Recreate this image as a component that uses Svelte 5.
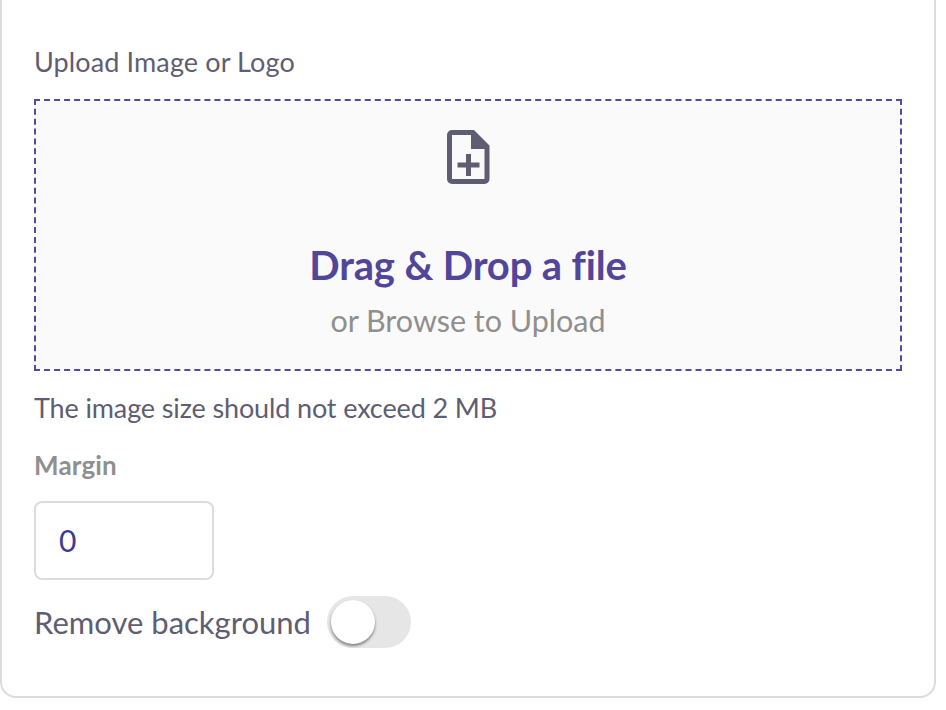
<script>
  let margin = $state(0);
  let removeBg = $state(false);
</script>

<div class="card">
  <p class="label">Upload Image or Logo</p>
  <div class="dropzone">
    <svg class="file-icon" viewBox="0 0 43 54" aria-hidden="true">
      <path fill-rule="evenodd" d="M5 0H27L42.5 15.5V49a5 5 0 0 1-5 5H5a5 5 0 0 1-5-5V5a5 5 0 0 1 5-5ZM5 5V49H37.5V19H24V5ZM19 24h5v8.500h8.500v5H24v8.500H19V37.500H10.500v-5H19Z"/>
    </svg>
    <div class="drop-title">Drag &amp; Drop a file</div>
    <div class="drop-sub">or Browse to Upload</div>
  </div>
  <p class="hint">The image size should not exceed 2 MB</p>
  <p class="field-label">Margin</p>
  <input class="margin-input" type="text" bind:value={margin} />
  <div class="toggle-row">
    <span class="toggle-label">Remove background</span>
    <button type="button" class="toggle" class:on={removeBg} aria-label="Remove background" onclick={() => (removeBg = !removeBg)}>
      <span class="knob"></span>
    </button>
  </div>
</div>

<style>
  :global(body) {
    background: #fff;
    font-family: Lato, "Open Sans", sans-serif;
  }

  .card {
    box-sizing: border-box;
    width: 936px;
    height: 698px;
    padding: 44px 32px 0;
    background: #fff;
    border: 2px solid #dcdcdc;
    border-top: none;
    border-radius: 0 0 16px 16px;
    color: #5f5d72;
  }

  p {
    margin: 0;
  }

  .label {
    font-size: 27px;
    line-height: 36px;
    letter-spacing: 0.12px;
  }

  .dropzone {
    box-sizing: border-box;
    height: 272px;
    margin-top: 19px;
    padding-top: 29px;
    display: flex;
    flex-direction: column;
    align-items: center;
    background: #fafafa;
    border: 2px dashed #54499b;
  }

  .file-icon {
    width: 43px;
    height: 54px;
    fill: #5f5d72;
  }

  .drop-title {
    margin-top: 56px;
    font-size: 40px;
    line-height: 50px;
    font-weight: 700;
    color: #51469a;
    letter-spacing: -0.15px;
  }

  .drop-sub {
    margin-top: 10px;
    font-size: 30.500px;
    line-height: 40px;
    color: #8f8f8f;
  }

  .hint {
    margin-top: 19px;
    font-size: 27px;
    line-height: 36px;
    letter-spacing: -0.13px;
  }

  .field-label {
    margin-top: 21px;
    font-size: 26px;
    line-height: 36px;
    font-weight: 700;
    color: #8f8f8f;
    letter-spacing: 0.15px;
  }

  .margin-input {
    display: block;
    box-sizing: border-box;
    width: 180px;
    height: 79px;
    margin-top: 18px;
    padding: 0 23px 2px;
    border: 2px solid #dcdcdc;
    border-radius: 8px;
    font: inherit;
    font-size: 30px;
    color: #3f3a94;
    background: #fff;
    outline: none;
  }

  .toggle-row {
    display: flex;
    align-items: center;
    gap: 16px;
    margin-top: 16px;
  }

  .toggle-label {
    font-size: 31px;
  }

  .toggle {
    position: relative;
    width: 84px;
    height: 52px;
    padding: 0;
    border: none;
    border-radius: 26px;
    background: #e6e6e6;
    cursor: pointer;
  }

  .toggle.on {
    background: #51469a;
  }

  .knob {
    position: absolute;
    top: 4px;
    left: 4px;
    width: 44px;
    height: 44px;
    border-radius: 50%;
    background: #fff;
    box-shadow: 0 2px 3px rgba(0, 0, 0, 0.45);
  }

  .toggle.on .knob {
    left: 36px;
  }
</style>
